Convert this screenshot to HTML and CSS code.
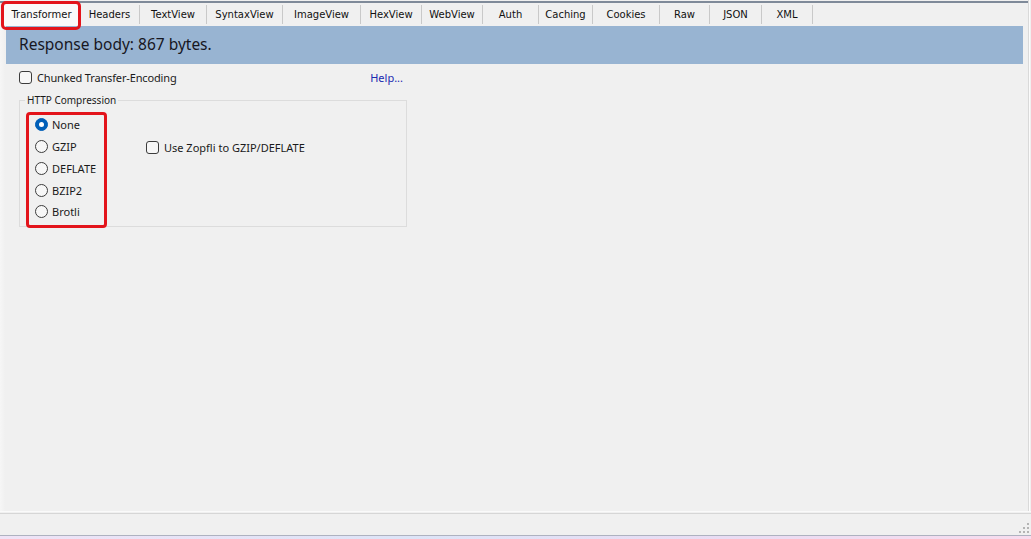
FILE: index.html
```html
<!DOCTYPE html>
<html>
<head>
<meta charset="utf-8">
<link rel="stylesheet" href="styles.css">
</head>
<body>
<div class="app">
  <div class="main">
    <div class="tabbar">
      <div class="tab t-transformer active">Transformer</div>
      <div class="tab t-headers">Headers</div>
      <div class="tab t-textview">TextView</div>
      <div class="tab t-syntax">SyntaxView</div>
      <div class="tab t-image">ImageView</div>
      <div class="tab t-hex">HexView</div>
      <div class="tab t-web">WebView</div>
      <div class="tab t-auth">Auth</div>
      <div class="tab t-caching">Caching</div>
      <div class="tab t-cookies">Cookies</div>
      <div class="tab t-raw">Raw</div>
      <div class="tab t-json">JSON</div>
      <div class="tab t-xml">XML</div>
    </div>
    <div class="content">
      <div class="banner">Response body: 867 bytes.</div>
      <div class="options">
        <div class="toprow">
          <label class="check chunked"><span class="box"></span>Chunked Transfer-Encoding</label>
          <span class="help">Help...</span>
        </div>
        <fieldset class="group">
          <legend>HTTP Compression</legend>
          <div class="groupbody">
            <div class="radios">
              <div class="radio"><span class="dot on"></span>None</div>
              <div class="radio"><span class="dot"></span>GZIP</div>
              <div class="radio"><span class="dot"></span>DEFLATE</div>
              <div class="radio"><span class="dot"></span>BZIP2</div>
              <div class="radio"><span class="dot"></span>Brotli</div>
            </div>
            <label class="check zopfli"><span class="box"></span>Use Zopfli to GZIP/DEFLATE</label>
          </div>
        </fieldset>
      </div>
    </div>
  </div>
  <div class="sep"></div>
  <div class="status">
    <svg class="grip" width="12" height="12" viewBox="0 0 12 12">
      <rect x="9" y="1" width="2" height="2" fill="#b4b4b4"/>
      <rect x="5" y="5" width="2" height="2" fill="#b4b4b4"/>
      <rect x="9" y="5" width="2" height="2" fill="#b4b4b4"/>
      <rect x="1" y="9" width="2" height="2" fill="#b4b4b4"/>
      <rect x="5" y="9" width="2" height="2" fill="#b4b4b4"/>
      <rect x="9" y="9" width="2" height="2" fill="#b4b4b4"/>
    </svg>
  </div>
  <div class="desktop"></div>
</div>
</body>
</html>
```

FILE: styles.css
```css
html, body {
  margin: 0;
  padding: 0;
}
body {
  width: 1031px;
  height: 539px;
  overflow: hidden;
  background: #f0f0f0;
  font-family: "Noto Sans", "Open Sans", sans-serif;
  font-size: 11px;
  color: #1a1a1a;
}
.app {
  display: flex;
  flex-direction: column;
  height: 539px;
}
.main {
  height: 511px;
  width: 1028px;
  border-right: 1px solid #d9d9d9;
  box-shadow: 1px 0 0 #fbfbfb;
  background: linear-gradient(to right, #f6f6f6 0, #f0f0f0 5px);
  display: flex;
  flex-direction: column;
}
.tabbar {
  margin-top: 1px;
  border-top: 2px solid #7f8a99;
  height: 23px;
  display: flex;
  padding-left: 3px;
  background: #f0f0f0;
}
.tab {
  font-family: "DejaVu Sans", sans-serif;
  font-size: 10px;
  color: #111;
  text-align: center;
  line-height: 19px;
  height: 19px;
  margin-top: 2px;
  border-right: 1px solid #c9c9c9;
  box-sizing: border-box;
}
.tab.active {
  position: relative;
  background: #fafafa;
  margin-top: 1px;
  height: 22px;
  line-height: 21px;
  border-right: none;
}
.tab.active::after {
  content: "";
  position: absolute;
  left: -2px;
  top: -3px;
  right: -1px;
  bottom: -4px;
  border: 3px solid #e3141b;
  border-radius: 5px;
}
.t-transformer { width: 77px; }
.t-headers { width: 60px; }
.t-textview { width: 67px; }
.t-syntax { width: 76px; }
.t-image { width: 78px; }
.t-hex { width: 61px; }
.t-web { width: 61px; }
.t-auth { width: 56px; }
.t-caching { width: 54px; }
.t-cookies { width: 67px; }
.t-raw { width: 50px; }
.t-json { width: 52px; }
.t-xml { width: 51px; }

.content {
  padding: 0 5px 0 6px;
}
.banner {
  height: 38px;
  line-height: 37px;
  background: #98b4d2;
  padding-left: 13px;
  font-size: 15.5px;
  color: #17171f;
}
.options {
  width: 388px;
  padding-left: 13px;
  padding-top: 5px;
}
.toprow {
  display: flex;
  justify-content: space-between;
  align-items: center;
  height: 16px;
}
.help {
  color: #1a2ab0;
  margin-right: 4px;
}
.check {
  display: flex;
  align-items: center;
}
.chunked {
  letter-spacing: -0.15px;
}
.box {
  width: 11px;
  height: 11px;
  border: 1px solid #3c3c3c;
  border-radius: 3px;
  background: #f7f7f7;
  margin-right: 5px;
}
.group {
  margin: 8px 0 0 0;
  padding: 0;
  border: 1px solid #dcdcdc;
}
.group legend {
  margin-left: 5px;
  padding: 0 2px;
  line-height: 14px;
  font-size: 10px;
}
.groupbody {
  display: flex;
  align-items: flex-start;
}
.radios {
  margin: 5px 0 -2px 6px;
  border: 3px solid #e3141b;
  border-radius: 4px;
  box-sizing: border-box;
  width: 81px;
  height: 116px;
}
.radio {
  display: flex;
  align-items: center;
  height: 21.75px;
  padding-left: 6px;
  padding-bottom: 2px;
  box-sizing: border-box;
}
.dot {
  width: 11px;
  height: 11px;
  border: 1px solid #3c3c3c;
  border-radius: 50%;
  background: #f7f7f7;
  margin-right: 4px;
  box-sizing: content-box;
  position: relative;
}
.dot.on {
  border-color: #005fb8;
  background: #005fb8;
}
.dot.on::after {
  content: "";
  position: absolute;
  left: 3px;
  top: 3px;
  width: 5px;
  height: 5px;
  border-radius: 50%;
  background: #fff;
}
.zopfli {
  margin: 32px 0 0 39px;
  height: 16px;
}
.sep {
  height: 1px;
  background: #fafafa;
  border-bottom: 1px solid #f0f0f0;
}
.status {
  height: 21px;
  border-top: 1px solid #d6d6d6;
  border-bottom: 1px solid #aeb2c0;
  display: flex;
  justify-content: flex-end;
  align-items: flex-end;
  padding-right: 1px;
}
.grip {
  display: block;
  margin-bottom: 1px;
}
.desktop {
  flex: 1;
  background: linear-gradient(to right, #efe3f6, #dde4f7 40%, #e9dcf3 70%, #f7dcee);
}
```
